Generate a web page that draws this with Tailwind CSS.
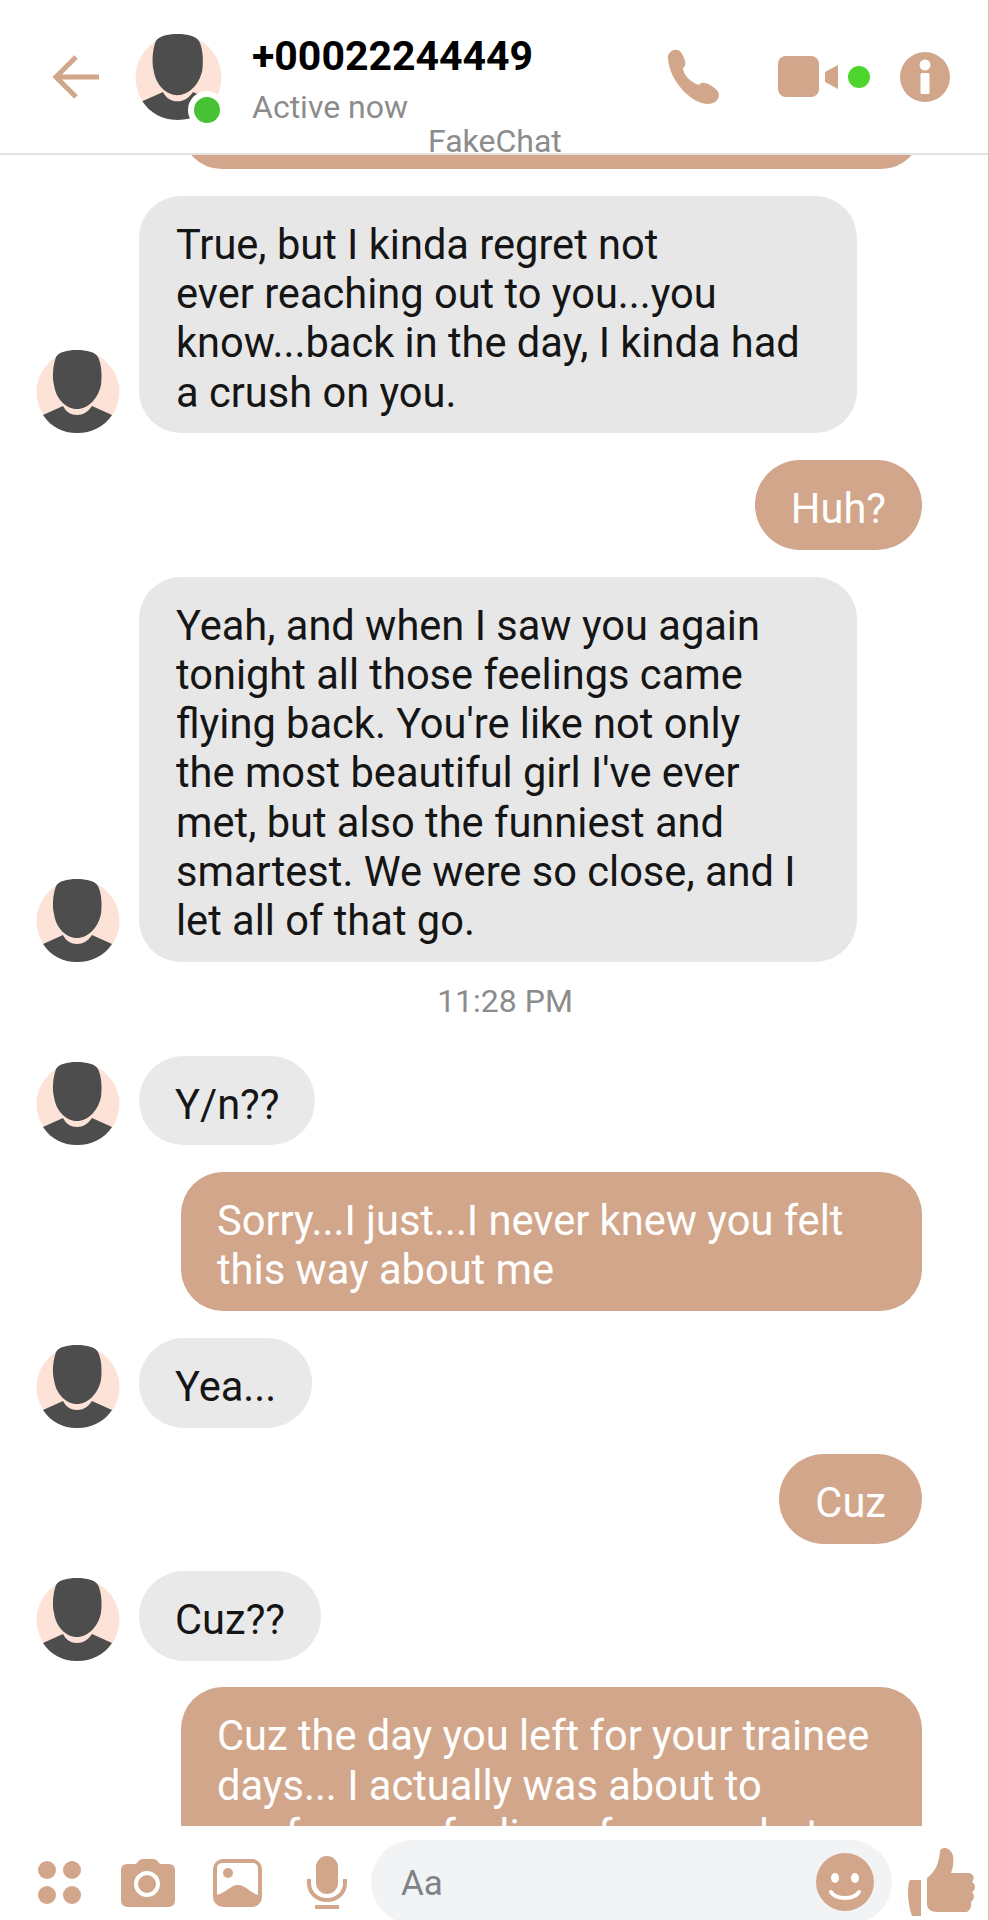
<!DOCTYPE html>
<html><head><meta charset="utf-8"><script src="https://cdn.jsdelivr.net/npm/@tailwindcss/browser@4"></script></head>
<body class="bg-white">
<svg width="0" height="0" class="absolute"><defs>
<symbol id="av" viewBox="0 0 84 84"><circle cx="42" cy="43" r="41.5" fill="#fde3d7"/><path d="M41 1C31 1 23 3 20 8C17 16 16 28 18 36C20 50 30 60 41 60C52 60 62 50 65 36C66 28 66 16 62 8C59 3 51 1 41 1Z" fill="#4d4d4d"/><path d="M7 66L27 57C30 63 35 66 41 66C47 66 52 63 56 57L76 66C68 78 55 84 41 84C27 84 15 78 7 66Z" fill="#4d4d4d"/></symbol>
</defs></svg>
<div class="relative w-[989px] h-[1920px] overflow-hidden flex flex-col border-r border-[#c4c4c4] font-['Roboto',sans-serif]">
  <header class="relative z-10 h-[155px] shrink-0 bg-white border-b-2 border-[#e2e2e2] flex items-start">
    <svg class="ml-[50px] mt-[52px]" width="50" height="50" viewBox="0 0 50 50" fill="none" stroke="#d2a68a" stroke-width="5"><path d="M49 25H6M26 5L6 25L26 45"/></svg>
    <div class="relative ml-[35px] mt-[33px] w-[87px] h-[87px]">
      <svg width="87" height="87"><use href="#av"/></svg>
      <span class="absolute left-[53px] top-[58px] w-[38px] h-[38px] rounded-full bg-[#47c234] border-[6px] border-white"></span>
    </div>
    <div class="ml-[30px] mt-[32px] w-[283px] shrink-0 whitespace-nowrap">
      <p class="text-[41px] leading-[48px] font-bold text-black">+00022244449</p>
      <p class="text-[32px] leading-[40px] mt-[7px] text-[#8c8c8c]">Active now</p>
    </div>
    <svg class="ml-[130px] mt-[49px] shrink-0" width="56" height="56" viewBox="0 0 56 56"><path d="M3 10C2 5 7 0 12 1C15 1 17 4 19 9C21 14 21 17 18 19C18 25 25 33 34 36C36 33 40 33 45 36C50 39 54 42 54 46C54 51 49 55 43 55C27 55 5 33 3 10Z" fill="#d2a68a"/></svg>
    <div class="ml-[57px] mt-[56px] flex items-center h-[41px] shrink-0">
      <span class="w-[41px] h-[41px] rounded-[8px] bg-[#d2a68a]"></span>
      <svg class="ml-[5px]" width="14" height="24" viewBox="0 0 14 24"><path d="M14 0V24L1 17V7Z" fill="#d2a68a"/></svg>
      <span class="ml-[10px] w-[22px] h-[22px] rounded-full bg-[#4fd62e]"></span>
    </div>
    <svg class="ml-[30px] mt-[52px] shrink-0" width="50" height="50" viewBox="0 0 50 50"><circle cx="25" cy="25" r="25" fill="#d2a68a"/><circle cx="25" cy="13" r="5.500" fill="#fff"/><rect x="20.500" y="21" width="9" height="21" rx="1.500" fill="#fff"/></svg>
    <span class="absolute left-[428px] top-[124px] text-[32px] leading-[34px] text-[#8c8c8c]">FakeChat</span>
  </header>

  <main class="flex-1 min-h-0 overflow-hidden flex flex-col gap-[26.700px] mt-[-27px] text-[41.600px] leading-[49.300px] text-[#151515] whitespace-nowrap">
    <div class="shrink-0 ml-[181px] mr-[66px] h-[41px] rounded-b-[42px] bg-[#d2a68a]"></div>
    <div class="shrink-0 flex items-end pl-[36px]">
      <svg class="shrink-0" width="84" height="84"><use href="#av"/></svg>
      <div class="ml-[19px] w-[718px] rounded-[42px] bg-[#e7e7e7] px-[37px] pt-[24px] pb-[16.500px]">True, but I kinda regret not<br>ever reaching out to you...you<br>know...back in the day, I kinda had<br>a crush on you.</div>
    </div>
    <div class="shrink-0 self-end mr-[66px] rounded-[45px] bg-[#d2a68a] text-white px-[36px] pt-[24px] pb-[16.500px]">Huh?</div>
    <div class="shrink-0 flex items-end pl-[36px]">
      <svg class="shrink-0" width="84" height="84"><use href="#av"/></svg>
      <div class="ml-[19px] w-[718px] rounded-[42px] bg-[#e7e7e7] px-[37px] pt-[24px] pb-[16.500px]">Yeah, and when I saw you again<br>tonight all those feelings came<br>flying back. You're like not only<br>the most beautiful girl I've ever<br>met, but also the funniest and<br>smartest. We were so close, and I<br>let all of that go.</div>
    </div>
    <p class="shrink-0 text-center pl-[22px] text-[32px] leading-[40px] text-[#8c8c8c] mt-[-8px] mb-[8px]">11:28 PM</p>
    <div class="shrink-0 flex items-end pl-[36px]">
      <svg class="shrink-0" width="84" height="84"><use href="#av"/></svg>
      <div class="ml-[19px] rounded-[45px] bg-[#e9e9e9] px-[36px] pt-[24px] pb-[16.500px]">Y/n??</div>
    </div>
    <div class="shrink-0 ml-[181px] mr-[66px] rounded-[42px] bg-[#d2a68a] text-white px-[36px] pt-[24px] pb-[16.500px]">Sorry...I just...I never knew you felt<br>this way about me</div>
    <div class="shrink-0 flex items-end pl-[36px]">
      <svg class="shrink-0" width="84" height="84"><use href="#av"/></svg>
      <div class="ml-[19px] rounded-[45px] bg-[#e9e9e9] px-[36px] pt-[24px] pb-[16.500px]">Yea...</div>
    </div>
    <div class="shrink-0 self-end mr-[66px] rounded-[45px] bg-[#d2a68a] text-white px-[36px] pt-[24px] pb-[16.500px]">Cuz</div>
    <div class="shrink-0 flex items-end pl-[36px]">
      <svg class="shrink-0" width="84" height="84"><use href="#av"/></svg>
      <div class="ml-[19px] rounded-[45px] bg-[#e9e9e9] px-[36px] pt-[24px] pb-[16.500px]">Cuz??</div>
    </div>
    <div class="shrink-0 ml-[181px] mr-[66px] rounded-[42px] bg-[#d2a68a] text-white px-[36px] pt-[24px] pb-[16.500px]">Cuz the day you left for your trainee<br>days... I actually was about to<br>confess my feelings for you...but</div>
  </main>

  <footer class="h-[94px] shrink-0 bg-white flex items-start">
    <div class="ml-[38px] mt-[35px] grid grid-cols-2 gap-[7px]">
      <span class="w-[18px] h-[18px] rounded-full bg-[#d2a68a]"></span><span class="w-[18px] h-[18px] rounded-full bg-[#d2a68a]"></span>
      <span class="w-[18px] h-[18px] rounded-full bg-[#d2a68a]"></span><span class="w-[18px] h-[18px] rounded-full bg-[#d2a68a]"></span>
    </div>
    <svg class="ml-[40px] mt-[33px]" width="54" height="48" viewBox="0 0 54 48"><path d="M6 5H15L18 1.500Q19 0 21 0H33Q35 0 36 1.500L39 5H48Q54 5 54 11V41Q54 48 47 48H7Q0 48 0 41V11Q0 5 6 5Z" fill="#d2a68a"/><circle cx="26" cy="25" r="11" fill="none" stroke="#fff" stroke-width="4"/></svg>
    <svg class="ml-[38px] mt-[33px]" width="49" height="48" viewBox="0 0 49 48"><rect width="49" height="48" rx="10" fill="#d2a68a"/><rect x="4" y="4" width="41" height="35" rx="5" fill="#fff"/><circle cx="15" cy="14" r="5" fill="#d2a68a"/><path d="M4 36C12 34 18 26 25 26C32 26 38 34 45 36V42H4Z" fill="#d2a68a"/></svg>
    <svg class="ml-[45px] mt-[30px]" width="40" height="54" viewBox="0 0 40 54"><rect x="9" y="0" width="22" height="38" rx="11" fill="#d2a68a"/><path d="M2 23V27C2 37 10 44 20 44C30 44 38 37 38 27V23" fill="none" stroke="#d2a68a" stroke-width="4"/><rect x="8" y="49" width="24" height="4" fill="#d2a68a"/></svg>
    <div class="ml-[24px] mt-[14px] w-[521px] h-[84px] shrink-0 rounded-[42px] bg-[#f1f3f5] flex items-center pl-[30px] pr-[18px]">
      <span class="text-[35px] leading-[40px] mt-[4px] text-[#7f8386]">Aa</span>
      <svg class="ml-auto" width="58" height="58" viewBox="0 0 58 58"><circle cx="29" cy="29" r="29" fill="#d2a68a"/><ellipse cx="19" cy="25" rx="4" ry="5" fill="#fff"/><ellipse cx="39" cy="25" rx="4" ry="5" fill="#fff"/><path d="M15 39C20 47 38 47 43 39" fill="none" stroke="#fff" stroke-width="4" stroke-linecap="round"/></svg>
    </div>
    <svg class="ml-[15px] mt-[22px]" width="69" height="70" viewBox="0 0 69 70"><path d="M2 34Q2 32 4 32H14V68H5Q-1 50 2 34Z" fill="#d2a68a"/><path d="M20 30C28 24 32 16 33 3C34 -2 44 -1 46 8C47 14 46 20 44 25H61C67 25 68 31 65 34C69 36 69 42 65 44C68 47 67 52 64 54C65 58 63 64 58 64H30C23 64 20 60 20 56Z" fill="#d2a68a"/></svg>
  </footer>
</div>
</body></html>
